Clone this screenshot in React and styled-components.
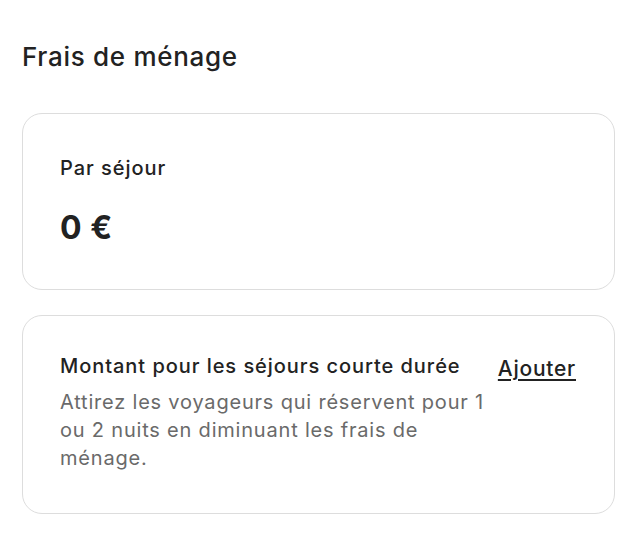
import styled, { createGlobalStyle } from "styled-components";

const GlobalStyle = createGlobalStyle`
  body {
    margin: 0;
    background: #ffffff;
    font-family: Inter, "Liberation Sans", sans-serif;
    color: #222222;
  }
`;

const Page = styled.div`
  padding: 38px 23px 24px 22px;
`;

const Heading = styled.h2`
  margin: 0 0 37px;
  font-size: 26px;
  font-weight: 500;
  line-height: 38px;
  letter-spacing: 0.7px;
  color: #222222;
`;

const CardList = styled.div`
  display: flex;
  flex-direction: column;
  gap: 25px;
`;

const Card = styled.div`
  border: 1px solid #dddddd;
  border-radius: 20px;
  padding: ${(props) => props.padding};
  display: flex;
  align-items: flex-start;
  gap: 12px;
`;

const CardBody = styled.div`
  flex: 1;
  min-width: 0;
`;

const Label = styled.div`
  font-size: 20px;
  font-weight: 500;
  line-height: 28px;
  letter-spacing: 0.95px;
  color: #222222;
`;

const Amount = styled.div`
  margin-top: 27px;
  font-size: 32px;
  font-weight: 700;
  line-height: 38px;
  letter-spacing: 0.6px;
  color: #222222;
`;

const Description = styled.p`
  margin: 8px 0 0;
  font-size: 20px;
  font-weight: 400;
  line-height: 28px;
  letter-spacing: 0.8px;
  color: #6a6a6a;
`;

const LinkButton = styled.button`
  border: none;
  background: none;
  padding: 0;
  margin-top: 2px;
  font-family: inherit;
  font-size: 21px;
  font-weight: 500;
  line-height: 30px;
  letter-spacing: 0.75px;
  color: #222222;
  text-decoration: underline;
  text-underline-offset: 3px;
  cursor: pointer;
  white-space: nowrap;
`;

const App = () => {
  return (
    <Page>
      <GlobalStyle />
      <Heading>Frais de ménage</Heading>
      <CardList>
        <Card padding="40px 37px 42px">
          <CardBody>
            <Label>Par séjour</Label>
            <Amount>0 €</Amount>
          </CardBody>
        </Card>
        <Card padding="36px 38px 41px 37px">
          <CardBody>
            <Label>Montant pour les séjours courte durée</Label>
            <Description>
              Attirez les voyageurs qui réservent pour 1 ou 2 nuits en
              diminuant les frais de ménage.
            </Description>
          </CardBody>
          <LinkButton>Ajouter</LinkButton>
        </Card>
      </CardList>
    </Page>
  );
};

export default App;
